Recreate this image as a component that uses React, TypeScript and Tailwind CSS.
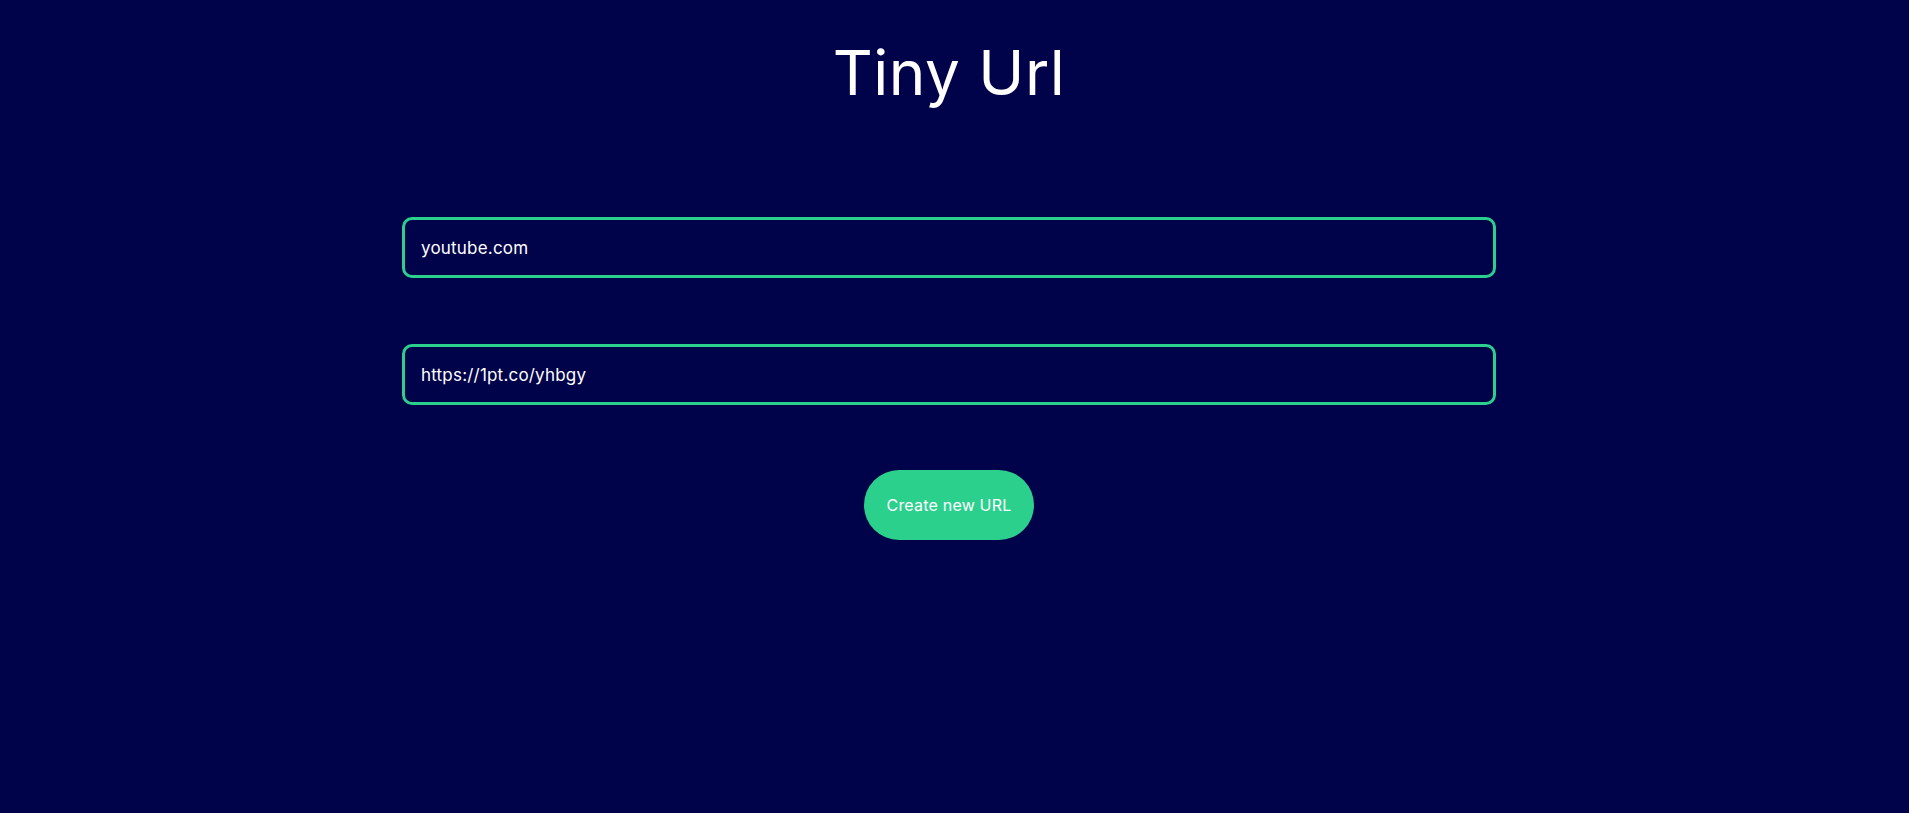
import { useState } from 'react';

export default function App() {
  const [longUrl, setLongUrl] = useState('youtube.com');
  const [shortUrl] = useState('https://1pt.co/yhbgy');

  return (
    <div className="min-h-screen w-full bg-[#00024a] text-white font-['Inter',sans-serif]">
      <div className="pr-[11px] flex flex-col items-center">
        {/* Title */}
        <h1 className="mt-[25px] text-[62px] leading-[96px] font-normal tracking-[0.5px]">Tiny Url</h1>

        <div className="mt-[96px] w-[1094px] flex flex-col gap-[66px]">
          <input
            value={longUrl}
            onChange={(e) => setLongUrl(e.target.value)}
            className="h-[61px] w-full rounded-[10px] border-[3px] border-[#2bd08d] bg-transparent px-[16px] text-[17px] tracking-[0.2px] text-white outline-none"
          />
          <input
            value={shortUrl}
            readOnly
            className="h-[61px] w-full rounded-[10px] border-[3px] border-[#2bd08d] bg-transparent px-[16px] text-[17px] tracking-[0.2px] text-white outline-none"
          />
        </div>

        <button className="mt-[65px] h-[70px] w-[170px] rounded-full bg-[#2bd08d] text-[16px] tracking-[0.2px] text-white">
          Create new URL
        </button>
      </div>
    </div>
  );
}
